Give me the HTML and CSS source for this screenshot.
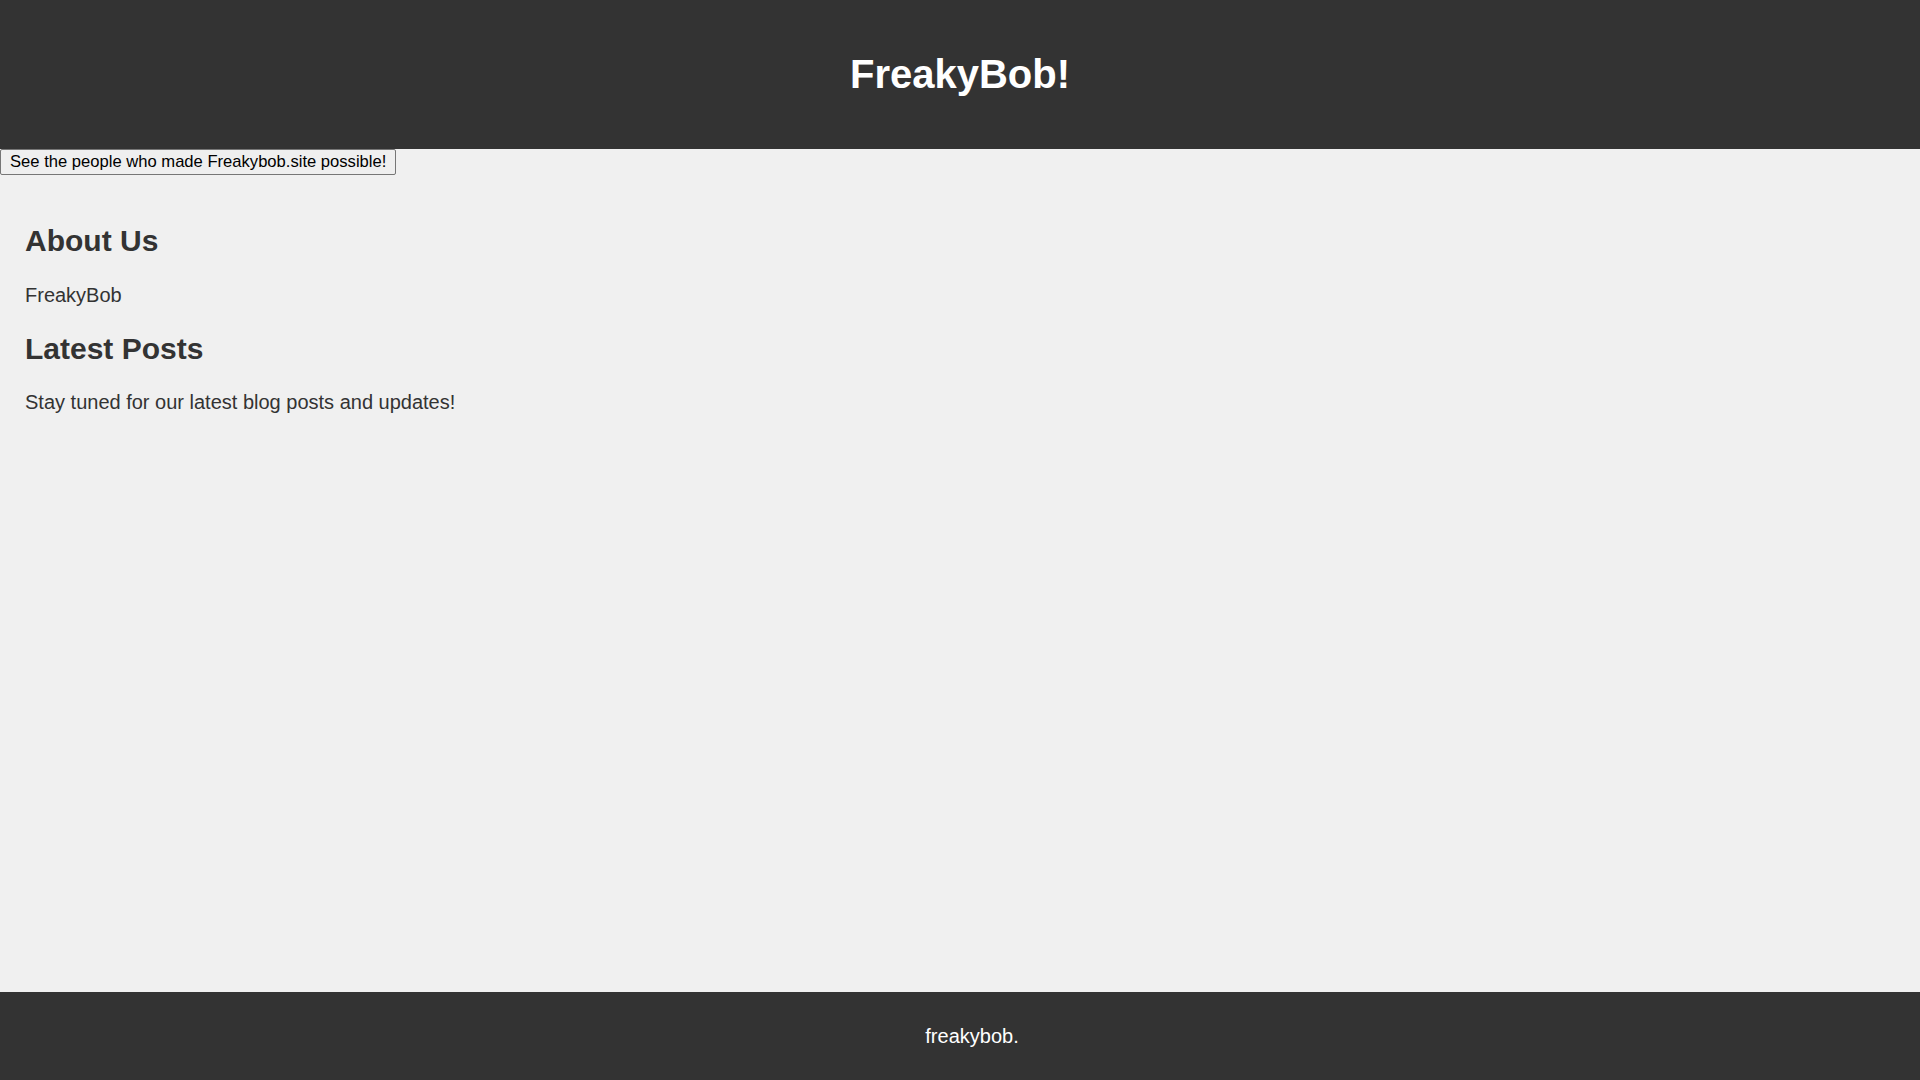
FILE: index.html
```html
<!DOCTYPE html>
<html lang="en">
<head>
<meta charset="utf-8">
<title>FreakyBob!</title>
<link rel="stylesheet" href="styles.css">
</head>
<body>
<header class="site-header">
  <h1 class="site-title">FreakyBob!</h1>
</header>
<button class="credits-btn" type="button">See the people who made Freakybob.site possible!</button>
<main class="content">
  <section class="section">
    <h2 class="section-title">About Us</h2>
    <p class="section-text">FreakyBob</p>
  </section>
  <section class="section">
    <h2 class="section-title">Latest Posts</h2>
    <p class="section-text">Stay tuned for our latest blog posts and updates!</p>
  </section>
</main>
<footer class="site-footer">
  <p class="footer-text">freakybob.</p>
</footer>
</body>
</html>
```
FILE: styles.css
```css
html, body {
  margin: 0;
  padding: 0;
}

body {
  font-family: "Liberation Sans", Arial, sans-serif;
  font-size: 20px;
  color: #333333;
  background: #f0f0f0;
  min-height: 100vh;
  display: flex;
  flex-direction: column;
  align-items: flex-start;
}

.site-header {
  align-self: stretch;
  background: #333333;
  color: #ffffff;
  text-align: center;
  padding: 51px 0 52px;
}

.site-title {
  margin: 0;
  font-size: 40px;
  font-weight: bold;
  line-height: 46px;
}

.credits-btn {
  font-family: "Liberation Sans", Arial, sans-serif;
  font-size: 16.6px;
  line-height: 18px;
  color: #000000;
  background: #efefef;
  border: 1px solid #767676;
  border-radius: 2px;
  padding: 3px 9px;
  margin: 0;
  cursor: pointer;
}

.content {
  align-self: stretch;
  flex: 1;
  padding: 24px 25px 0;
}

.section-title {
  font-size: 30px;
  font-weight: bold;
  margin: 25px 0;
  line-height: 34.5px;
}

.section-text {
  margin: 20px 0;
  line-height: 23px;
}

.site-footer {
  align-self: stretch;
  background: #333333;
  color: #ffffff;
  text-align: center;
  height: 88px;
  padding-left: 24px;
  display: flex;
  align-items: center;
  justify-content: center;
}

.footer-text {
  margin: 0;
  line-height: 23px;
}
```
